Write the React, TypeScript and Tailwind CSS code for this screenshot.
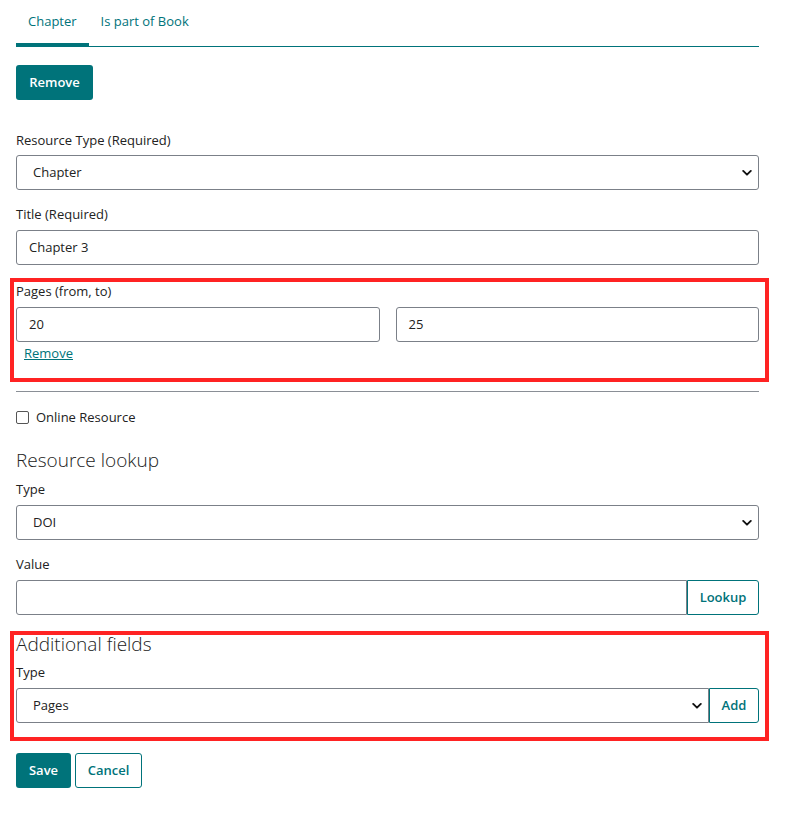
import React from "react";

function Chevron() {
  return (
    <svg width="10" height="7" viewBox="0 0 10 7" className="pointer-events-none absolute right-[7px] top-1/2 -translate-y-1/2">
      <path d="M1.2 1.4 L5 5.2 L8.8 1.4" fill="none" stroke="#111" strokeWidth="1.9" strokeLinecap="round" strokeLinejoin="round" />
    </svg>
  );
}

function SelectBox({ value, className = "" }: { value: string; className?: string }) {
  return (
    <div className={`relative h-[35px] ${className}`}>
      <div className="flex h-full w-full items-center rounded-[3px] border border-[#7b8088] bg-white pl-[16px] text-[13px] text-[#222]">
        {value}
      </div>
      <Chevron />
    </div>
  );
}

function TextBox({ value = "", className = "" }: { value?: string; className?: string }) {
  return (
    <div className={`flex h-[35px] items-center rounded-[3px] border border-[#7b8088] bg-white pl-[12px] text-[13px] text-[#222] ${className}`}>
      {value}
    </div>
  );
}

function Label({ children, className = "" }: { children: React.ReactNode; className?: string }) {
  return <div className={`text-[13px] leading-[18px] text-[#222] ${className}`}>{children}</div>;
}

export default function App() {
  return (
    <div className="min-h-[818px] w-[786px] bg-white" style={{ fontFamily: '"Open Sans", "Noto Sans", sans-serif' }}>
      <div className="pl-[16px] pr-[27px]">
        {/* Tabs */}
        <div className="flex border-b border-[#00737a]">
          <div className="-mb-[1px] border-b-[4px] border-[#00737a] px-[12px] pt-[12px] pb-[13px] text-[13px] leading-[18px] text-[#00737a]">
            Chapter
          </div>
          <div className="px-[12px] pt-[12px] pb-[13px] text-[13px] leading-[18px] text-[#00737a]">Is part of Book</div>
        </div>

        <button className="mt-[18px] h-[35px] w-[77px] rounded-[3px] bg-[#00737a] text-[13px] font-semibold text-white">
          Remove
        </button>

        <Label className="mt-[31px]">Resource Type (Required)</Label>
        <SelectBox value="Chapter" className="mt-[6px]" />

        <Label className="mt-[15px]">Title (Required)</Label>
        <TextBox value="Chapter 3" className="mt-[7px]" />

        {/* Pages */}
        <div className="relative">
          <div className="pointer-events-none absolute -left-[6px] -right-[10px] top-[13px] h-[104px] border-[4px] border-[#ff2323]" />
          <Label className="pt-[17px]">Pages (from, to)</Label>
          <div className="mt-[7px] flex gap-[16px]">
            <TextBox value="20" className="flex-1" />
            <TextBox value="25" className="flex-1" />
          </div>
          <div className="mt-[2px] pl-[8px] text-[13px] leading-[18px] text-[#00737a] underline">Remove</div>
        </div>

        <div className="mt-[29px] border-t border-[#8a8f96]" />

        <div className="mt-[16px] flex items-center gap-[7px]">
          <div className="h-[13px] w-[13px] rounded-[2px] border border-[#555]" />
          <span className="text-[13px] leading-[18px] text-[#222]">Online Resource</span>
        </div>

        <div className="mt-[21px] text-[19px] font-light leading-[26px] text-[#222]">Resource lookup</div>
        <Label className="mt-[7px]">Type</Label>
        <SelectBox value="DOI" className="mt-[7px]" />

        <Label className="mt-[15px]">Value</Label>
        <div className="mt-[7px] flex h-[35px]">
          <div className="flex-1 rounded-l-[3px] border border-[#7b8088]" />
          <button className="w-[72px] rounded-r-[3px] border border-[#00737a] text-[13px] font-semibold text-[#00737a]">
            Lookup
          </button>
        </div>

        {/* Additional fields */}
        <div className="relative">
          <div className="pointer-events-none absolute -left-[6px] -right-[10px] top-[16px] h-[110px] border-[4px] border-[#ff2323]" />
          <div className="pt-[16px] text-[19px] font-light leading-[26px] text-[#222]">Additional fields</div>
          <Label className="mt-[6px]">Type</Label>
          <div className="mt-[7px] flex h-[35px]">
            <div className="relative flex-1">
              <div className="flex h-full items-center rounded-l-[3px] border border-[#7b8088] pl-[16px] text-[13px] text-[#222]">Pages</div>
              <Chevron />
            </div>
            <button className="w-[50px] rounded-r-[3px] border border-[#00737a] text-[13px] font-semibold text-[#00737a]">
              Add
            </button>
          </div>
        </div>

        <div className="mt-[30px] flex gap-[4px]">
          <button className="h-[35px] w-[55px] rounded-[3px] bg-[#00737a] text-[13px] font-semibold text-white">Save</button>
          <button className="h-[35px] w-[67px] rounded-[3px] border border-[#00737a] text-[13px] font-semibold text-[#00737a]">
            Cancel
          </button>
        </div>
      </div>
    </div>
  );
}
